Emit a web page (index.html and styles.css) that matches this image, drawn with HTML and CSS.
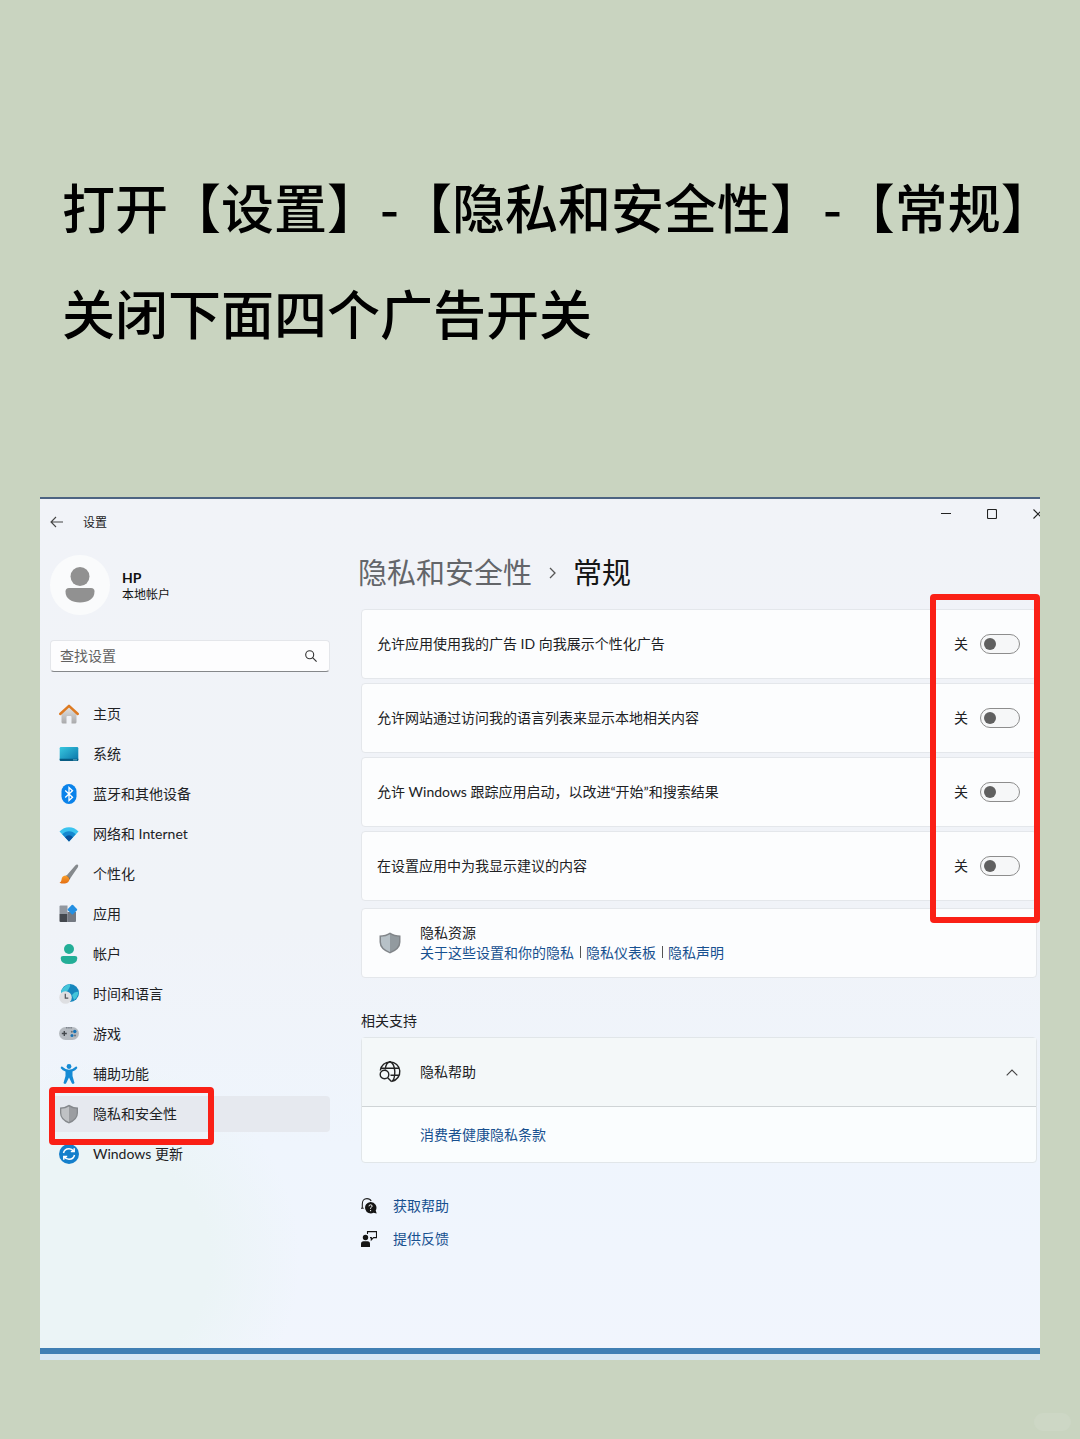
FILE: index.html
```html
<!DOCTYPE html>
<html lang="zh-CN">
<head>
    <meta charset="UTF-8">
    <meta name="viewport" content="width=device-width, initial-scale=1.0">
    <title>隐私和安全性 - 常规</title>
    <link rel="stylesheet" href="styles.css">
</head>
<body>

    <h1 class="headline">打开【设置】-【隐私和安全性】-【常规】<br>关闭下面四个广告开关</h1>

    <div class="window">
        <header class="titlebar">
            <button class="back-btn" aria-label="返回">
                <svg width="14" height="12" viewBox="0 0 14 12" fill="none" stroke="#444" stroke-width="1.1"><path d="M13 6H1M6 1L1 6l5 5"/></svg>
            </button>
            <span class="app-name">设置</span>
            <div class="window-controls">
                <button aria-label="最小化"><svg width="10" height="10" viewBox="0 0 10 10" stroke="#222"><path d="M0 4.5h10"/></svg></button>
                <button aria-label="最大化"><svg width="10" height="10" viewBox="0 0 10 10" fill="none" stroke="#222" stroke-width="1.1"><rect x=".5" y=".5" width="9" height="9" rx="1"/></svg></button>
                <button aria-label="关闭"><svg width="10" height="10" viewBox="0 0 10 10" stroke="#222" stroke-width="1.1"><path d="M.5.5l9 9M9.5.5l-9 9"/></svg></button>
            </div>
        </header>

        <div class="layout">
            <aside class="sidebar">
                <div class="account">
                    <div class="avatar">
                        <svg width="30" height="36" viewBox="0 0 30 36" fill="#919191"><circle cx="15" cy="9.500" r="9.500"/><path d="M4 21h22q3.500 0 3.500 3.500C29.500 32 23 35.500 15 35.500S.5 32 .5 24.500Q.5 21 4 21z"/></svg>
                    </div>
                    <div class="account-text">
                        <strong>HP</strong>
                        <span>本地帐户</span>
                    </div>
                </div>

                <div class="search">
                    <input type="text" placeholder="查找设置" aria-label="查找设置">
                    <svg width="12" height="12" viewBox="0 0 12 12" fill="none" stroke="#333" stroke-width="1.1"><circle cx="4.700" cy="4.700" r="4"/><path d="M7.600 7.600l4 4"/></svg>
                </div>

                <nav>
                    <ul class="nav-list">
                        <li><a href="#">
                            <svg class="nav-icon" viewBox="0 0 20 20">
                                <defs><linearGradient id="wall" x2="0" y2="1"><stop offset="0" stop-color="#e6e6e6"/><stop offset="1" stop-color="#a9a9ab"/></linearGradient></defs>
                                <path d="M2.500 9L10 2l7.500 7v9q0 1.500-1.500 1.500h-3.500V13q0-1-1-1h-3q-1 0-1 1v6.500H4Q2.500 19.500 2.500 18z" fill="url(#wall)"/>
                                <path d="M1.200 10L10 1.800 18.800 10" fill="none" stroke="#dd7a22" stroke-width="2.400" stroke-linecap="round" stroke-linejoin="round"/>
                            </svg>
                            主页</a></li>
                        <li><a href="#">
                            <svg class="nav-icon" viewBox="0 0 20 20">
                                <defs><linearGradient id="screen" x2="1" y2="1"><stop offset="0" stop-color="#38c8e0"/><stop offset="1" stop-color="#0872a8"/></linearGradient></defs>
                                <rect x=".7" y="3" width="18.600" height="14" rx="1.200" fill="url(#screen)"/>
                                <path d="M.7 14.800h18.600v1q0 1.200-1.200 1.200H1.900Q.7 17 .7 15.800z" fill="#075b83"/>
                                <path d="M14 15.900h4" stroke="#8bd4e8" stroke-width=".7"/>
                            </svg>
                            系统</a></li>
                        <li><a href="#">
                            <svg class="nav-icon" viewBox="0 0 20 20">
                                <rect x="2.500" width="15" height="20" rx="7.500" fill="#0a82ea"/>
                                <path d="M6.200 6.500l7.300 6.800L10 16.500v-13l3.500 3.200-7.300 6.800" fill="none" stroke="#fff" stroke-width="1.300"/>
                            </svg>
                            蓝牙和其他设备</a></li>
                        <li><a href="#">
                            <svg class="nav-icon" viewBox="0 0 20 20">
                                <path d="M.5 7.500Q4.500 3.200 10 3.200t9.500 4.300L10 17.500z" fill="#3bc3ef"/>
                                <path d="M3.300 10.300Q6 7.200 10 7.200t6.700 3.100L10 17.500z" fill="#1587cf"/>
                                <path d="M6.100 13.300Q7.700 11.200 10 11.200t3.900 2.100L10 17.500z" fill="#0a529c"/>
                            </svg>
                            网络和 Internet</a></li>
                        <li><a href="#">
                            <svg class="nav-icon" viewBox="0 0 20 20">
                                <defs><linearGradient id="tip" x2="0" y2="1"><stop offset="0" stop-color="#f9a02c"/><stop offset="1" stop-color="#e36d12"/></linearGradient></defs>
                                <path d="M18.500.6q1.300.8.500 2.400L11.500 14 8 11 16.500 1.300q1-1.200 2-.7z" fill="#85898d"/>
                                <path d="M8 11l3.500 3-1.500 2-4-3.200z" fill="#5c6064"/>
                                <path d="M6.300 11.500q3.500.5 4.200 4-.7 3.500-4.500 4-3 .3-5.500-.8 2-.8 2-3 .3-3.700 3.800-4.200z" fill="url(#tip)"/>
                            </svg>
                            个性化</a></li>
                        <li><a href="#">
                            <svg class="nav-icon" viewBox="0 0 20 20">
                                <path d="M1.500 1.500h7V10h-8V2.500q0-1 1-1z" fill="#92979f"/>
                                <path d="M.5 10h8v8h-7q-1 0-1-1z" fill="#44484e"/>
                                <path d="M8.500 8H17v9q0 1-1 1H8.500z" fill="#747982"/>
                                <rect x="9.700" y="1.900" width="7.400" height="7.400" rx="1" transform="rotate(45 13.400 5.600)" fill="#238fe2"/>
                            </svg>
                            应用</a></li>
                        <li><a href="#">
                            <svg class="nav-icon" viewBox="0 0 20 20" fill="#23ae97">
                                <circle cx="10" cy="5" r="5"/>
                                <path d="M4 12h12q2.300 0 2.300 2 0 6-8.300 6t-8.300-6q0-2 2.300-2z"/>
                            </svg>
                            帐户</a></li>
                        <li><a href="#">
                            <svg class="nav-icon" viewBox="0 0 20 20">
                                <circle cx="11" cy="9" r="9" fill="#1686bd"/>
                                <path d="M4 4q3-3.500 7-4 1 2-1 4.500Q8.500 8 4.500 9H2q0-3 2-5zM13 11q3-4 6.500-3-.5 5-4.500 8z" fill="#44c5da"/>
                                <circle cx="6.500" cy="13.500" r="6.300" fill="#dedfe2"/>
                                <path d="M6.300 9.800v4.300h3" fill="none" stroke="#50545a" stroke-width="1.200"/>
                            </svg>
                            时间和语言</a></li>
                        <li><a href="#">
                            <svg class="nav-icon" viewBox="0 0 20 20">
                                <rect y="3" width="20" height="13" rx="6.500" fill="#b5bac0"/>
                                <path d="M7 3.700h6" stroke="#7c838b" stroke-width="1.500" stroke-dasharray="1.500 .7"/>
                                <path d="M2.800 9.500h5M5.300 7v5" stroke="#44484d" stroke-width="1.400"/>
                                <g fill="#1773b6"><circle cx="15.800" cy="7.500" r="1.700"/><circle cx="13" cy="11.500" r="1.500"/></g>
                                <circle cx="12.800" cy="7.800" r="1" fill="#6d737a"/><circle cx="16" cy="11.500" r="1" fill="#6d737a"/>
                            </svg>
                            游戏</a></li>
                        <li><a href="#">
                            <svg class="nav-icon" viewBox="0 0 20 20" fill="#168bd4">
                                <circle cx="10" cy="2.500" r="2.400"/>
                                <path d="M3 2.500Q6.500 5.700 10 5.700T17 2.500q1.500 0 1.200 1.700Q16.500 6.400 13.500 7.500v4.500l2 7q-.8 1.200-2.400.7L10 13.500 6.900 19.700q-1.600.5-2.400-.7l2-7V7.500Q3.500 6.400 1.800 4.200 1.500 2.500 3 2.500z"/>
                            </svg>
                            辅助功能</a></li>
                        <li class="active"><a href="#">
                            <svg class="nav-icon" viewBox="0 0 20 20">
                                <path d="M10 .8q4 2.700 9 2.700v5.500q0 7-9 10.500Q1 16 1 9V3.500q5 0 9-2.700z" fill="#85888c"/>
                                <path d="M10 2.400v15.700Q2.300 15 2.300 9V4.700Q6.500 4.500 10 2.400z" fill="#bfc1c4"/>
                                <path d="M10 2.400v15.700Q17.700 15 17.700 9V4.700Q13.500 4.500 10 2.400z" fill="#9b9da1"/>
                            </svg>
                            隐私和安全性</a><span class="mark nav-mark"></span></li>
                        <li><a href="#">
                            <svg class="nav-icon" viewBox="0 0 20 20">
                                <circle cx="10" cy="10" r="10" fill="#147fcb"/>
                                <path d="M4.500 9q1-4.300 5.500-4.300 3 0 4.800 2.500M15.500 11q-1 4.300-5.500 4.300-3 0-4.800-2.500M15.200 4.300v3.200h-3.400M4.800 15.700v-3.200h3.400" fill="none" stroke="#fff" stroke-width="1.500"/>
                            </svg>
                            Windows 更新</a></li>
                    </ul>
                </nav>
            </aside>

            <main>
                <h2 class="breadcrumb">
                    <a href="#">隐私和安全性</a>
                    <svg width="7" height="12" viewBox="0 0 7 12" fill="none" stroke="#555" stroke-width="1.300"><path d="M1 1l5 5-5 5"/></svg>
                    <span>常规</span>
                </h2>

                <div class="content">
                    <div class="toggle-list">
                        <div class="card">
                            <label class="card-title" for="ad-id">允许应用使用我的广告 ID 向我展示个性化广告</label>
                            <span>关</span>
                            <input type="checkbox" class="switch" id="ad-id">
                        </div>
                        <div class="card">
                            <label class="card-title" for="language-list">允许网站通过访问我的语言列表来显示本地相关内容</label>
                            <span>关</span>
                            <input type="checkbox" class="switch" id="language-list">
                        </div>
                        <div class="card">
                            <label class="card-title" for="app-launch">允许 Windows 跟踪应用启动，以改进“开始”和搜索结果</label>
                            <span>关</span>
                            <input type="checkbox" class="switch" id="app-launch">
                        </div>
                        <div class="card">
                            <label class="card-title" for="suggested">在设置应用中为我显示建议的内容</label>
                            <span>关</span>
                            <input type="checkbox" class="switch" id="suggested">
                        </div>
                        <span class="mark toggle-mark"></span>
                    </div>

                    <div class="card resources">
                        <svg class="card-icon" viewBox="0 0 24 24">
                            <path d="M12 1.500q4.500 3 10.500 3V11q0 7.500-10.500 11.500Q1.500 18.500 1.500 11V4.500q6 0 10.500-3z" fill="#818589"/>
                            <path d="M12 3.200v17.700Q3 17.300 3 11V5.700q5 0 9-2.500z" fill="#b7c1c7"/>
                            <path d="M12 3.200v17.700Q21 17.300 21 11V5.700q-5 0-9-2.500z" fill="#929a9f"/>
                        </svg>
                        <div>
                            <div>隐私资源</div>
                            <div class="links">
                                <a href="#">关于这些设置和你的隐私</a>
                                <a href="#">隐私仪表板</a>
                                <a href="#">隐私声明</a>
                            </div>
                        </div>
                    </div>

                    <h3 class="section-title">相关支持</h3>
                    <div class="expander">
                        <button class="expander-header" aria-expanded="true">
                            <svg class="card-icon" viewBox="0 0 24 24" fill="none" stroke="#222" stroke-width="1.400">
                                <path d="M2.300 10.500A9.800 9.800 0 1 1 14 21.300M3 8.200h18.200M12.500 15.300h8.700M7.300 9.500C7.700 5 9.500 2 12 2s4.800 4.500 4.800 9.800-1.300 8.500-2.800 9.500"/>
                                <circle cx="6.500" cy="14.500" r="4.300"/><path d="M9.700 17.700l4 4"/>
                            </svg>
                            <span>隐私帮助</span>
                            <svg class="chevron" width="12" height="7" viewBox="0 0 12 7" fill="none" stroke="#444" stroke-width="1.100"><path d="M.7 6.300L6 1l5.300 5.300"/></svg>
                        </button>
                        <div class="expander-body"><a href="#">消费者健康隐私条款</a></div>
                    </div>

                    <ul class="help-links">
                        <li><a href="#">
                            <svg width="16" height="16" viewBox="0 0 16 16">
                                <path d="M1.300 10.500V6.200Q1.300.6 6 .6q3 0 4.200 2.500M0 10.300h2.700" fill="none" stroke="#222" stroke-width="1.100"/>
                                <path d="M9.500 4a5.700 5.700 0 1 0 3 10.700l3.200.8-1-3A5.700 5.700 0 0 0 9.500 4z" fill="#151515"/>
                                <path d="M8 8.300q0-1.500 1.600-1.500t1.500 1.400q0 .8-1.500 1.600v1M9.600 12v1.200" fill="none" stroke="#fff"/>
                            </svg>
                            获取帮助</a></li>
                        <li><a href="#">
                            <svg width="16" height="16" viewBox="0 0 16 16">
                                <circle cx="4.500" cy="6.500" r="2.700" fill="#151515"/>
                                <path d="M0 16v-3q0-2.700 2.500-2.700h4Q9 10.300 9 13v3z" fill="#151515"/>
                                <path d="M6.500 3V.6h9v6h-3L10.300 8.800V6.600H9" fill="none" stroke="#151515" stroke-width="1.100"/>
                            </svg>
                            提供反馈</a></li>
                    </ul>
                </div>
            </main>
        </div>

        <div class="taskbar"></div>
    </div>

    <footer class="page-footer"><span class="badge"></span></footer>

</body>
</html>
```
FILE: styles.css
```css
* {
    box-sizing: border-box;
}

body {
    margin: 0;
    min-height: 100vh;
    background-color: #c9d4c0;
    color: #202124;
    font-family: Lato, "Noto Sans CJK SC", sans-serif;
    font-size: 14px;
    line-height: 20px;
}

h1, h2, h3, ul {
    margin: 0;
    padding: 0;
}

ul {
    list-style: none;
}

a {
    color: #17508f;
    text-decoration: none;
}

button {
    padding: 0;
    border: none;
    background: none;
    font: inherit;
    color: inherit;
}

svg {
    display: block;
    flex-shrink: 0;
}

/* Headline */
.headline {
    padding: 153px 0 132px 62px;
    color: #000;
    font-family: "Noto Sans CJK SC", sans-serif;
    font-size: 53px;
    font-weight: 500;
    line-height: 106px;
    white-space: nowrap;
}

/* Settings window */
.window {
    margin: 0 40px;
    overflow: hidden;
    border-top: 2px solid #4d6482;
    background: radial-gradient(circle at 60px 760px, #ebf4f6 0, #ebf4f6 110px, transparent 200px),
        linear-gradient(#f1f3f8 0, #f0f3f8 50%, #eff5fd 75%, #f1f5fd 100%);
}

.titlebar {
    display: flex;
    align-items: center;
    height: 46px;
    padding-left: 10px;
}

.app-name {
    margin-left: 19px;
    padding-top: 2px;
    font-size: 12px;
}

.window-controls {
    display: flex;
    align-self: flex-start;
    margin-left: auto;
    margin-right: -21px;
}

.window-controls button {
    display: grid;
    place-items: center;
    width: 46px;
    height: 30px;
}

.layout {
    display: grid;
    grid-template-columns: 280px 1fr;
    gap: 28px;
    padding: 8px 0 99px 10px;
}

/* Sidebar */
.account {
    display: flex;
    align-items: center;
    gap: 12px;
    padding-top: 2px;
}

.avatar {
    display: grid;
    place-items: center;
    width: 60px;
    height: 60px;
    border-radius: 50%;
    background-color: #fafbfc;
}

.account-text {
    display: flex;
    flex-direction: column;
    padding-top: 2px;
    color: #111;
    font-size: 12px;
    line-height: 17px;
}

.account-text strong {
    font-size: 14px;
}

.search {
    display: flex;
    align-items: center;
    height: 32px;
    margin: 25px 0 24px;
    padding: 0 12px 0 9px;
    border: 1px solid #e4e6ea;
    border-bottom-color: #85878a;
    border-radius: 4px;
    background-color: #fdfdfe;
}

.search input {
    flex: 1;
    min-width: 0;
    padding: 0;
    border: none;
    outline: none;
    background: none;
    font: inherit;
}

.search input::placeholder {
    color: #626262;
}

.nav-list {
    display: flex;
    flex-direction: column;
    gap: 4px;
}

.nav-list li {
    position: relative;
    border-radius: 4px;
}

.nav-list a {
    display: flex;
    align-items: center;
    gap: 14px;
    height: 36px;
    padding-left: 9px;
    color: #202124;
}

.nav-list .active {
    z-index: 1;
    background-color: #e6e9ef;
}

.nav-icon {
    width: 20px;
    height: 20px;
}

/* Red marker frames */
.mark {
    position: absolute;
    border: 6px solid #fa2016;
    border-radius: 4px;
    pointer-events: none;
}

.nav-mark {
    top: -9px;
    bottom: -13px;
    left: -1px;
    width: 165px;
}

.toggle-mark {
    top: -15px;
    right: -3px;
    bottom: -22px;
    width: 110px;
}

/* Main column */
.breadcrumb {
    display: flex;
    align-items: center;
    gap: 17px;
    font-size: 29px;
    font-weight: 400;
    line-height: 40px;
}

.breadcrumb a {
    color: #636569;
}

.breadcrumb span {
    color: #151515;
}

.content {
    padding: 16px 3px 0;
}

.toggle-list {
    position: relative;
    display: flex;
    flex-direction: column;
    gap: 4px;
}

.card {
    display: flex;
    align-items: center;
    gap: 12px;
    height: 70px;
    padding: 0 16px 0 15px;
    border: 1px solid #e4e7eb;
    border-radius: 4px;
    background-color: #fcfdfe;
}

.card-title {
    flex: 1;
}

.switch {
    appearance: none;
    display: flex;
    align-items: center;
    width: 40px;
    height: 20px;
    margin: 0;
    padding-left: 3px;
    border: 1px solid #8d8d8d;
    border-radius: 10px;
    background-color: #f6f7f8;
}

.switch::before {
    content: "";
    width: 12px;
    height: 12px;
    border-radius: 50%;
    background-color: #606060;
}

.switch:checked {
    justify-content: flex-end;
    padding: 0 3px 0 0;
}

.card-icon {
    width: 24px;
    height: 24px;
}

.resources {
    gap: 18px;
    margin-top: 7px;
    padding-left: 16px;
}

.links {
    display: flex;
    align-items: center;
}

.links a + a::before {
    content: "";
    display: inline-block;
    width: 1px;
    height: 12px;
    margin: 0 5px 0 6px;
    background-color: #555;
}

.section-title {
    margin: 33px 0 6px;
    font-size: 14px;
    font-weight: 400;
}

.expander {
    border: 1px solid #e1e6e9;
    border-radius: 4px;
    background-color: #fafdfe;
}

.expander-header {
    display: flex;
    align-items: center;
    gap: 18px;
    width: 100%;
    height: 69px;
    padding: 0 18px 0 16px;
    border-bottom: 1px solid #cfd4d6;
    background-color: #f4f8f9;
}

.chevron {
    margin-left: auto;
}

.expander-body {
    padding: 18px 58px 17px;
}

.help-links {
    display: flex;
    flex-direction: column;
    gap: 13px;
    margin-top: 33px;
}

.help-links a {
    display: flex;
    align-items: center;
    gap: 16px;
}

/* Strip under the window */
.taskbar {
    height: 12px;
    border-top: 6px solid #407fb3;
    background-color: #d8e7f3;
}

.page-footer {
    display: flex;
    justify-content: flex-end;
    padding: 53px 9px 8px;
}

.badge {
    width: 37px;
    height: 18px;
    border-radius: 9px;
    background-color: #cdd7c5;
}
```
